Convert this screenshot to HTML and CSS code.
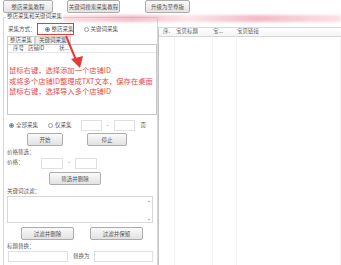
FILE: index.html
```html
<!DOCTYPE html>
<html lang="zh-CN">
<head>
    <meta charset="UTF-8">
    <title>淘宝采集</title>
    <link rel="stylesheet" href="styles.css">
</head>
<body>

    <!-- 顶部按钮 -->
    <div class="toolbar">
        <button class="btn btn-guide">整店采集教程</button>
        <button class="btn btn-search">关键词搜索采集教程</button>
        <button class="btn btn-upgrade">升级为至尊版</button>
    </div>
    <div class="banner"></div>

    <div class="main">
        <!-- 左侧设置 -->
        <fieldset class="group">
            <legend>整店采集和关键词采集</legend>

            <div class="row mode-row">
                <span>采集方式：</span>
                <label class="radio checked highlight"><i></i>整店采集</label>
                <label class="radio"><i></i>关键词采集</label>
            </div>

            <div class="tabs">
                <span class="tab active">整店采集</span>
                <span class="tab">关键词采集</span>
            </div>

            <div class="shop-list">
                <div class="list-head">
                    <span class="col-no">序号</span>
                    <span class="col-id">店铺ID</span>
                    <span>状...</span>
                </div>
                <div class="tips">
                    <p>鼠标右键，选择添加一个店铺ID</p>
                    <p>或将多个店铺ID整理成TXT文本，保存在桌面</p>
                    <p>鼠标右键，选择导入多个店铺ID</p>
                </div>
            </div>

            <div class="row page-row">
                <label class="radio checked"><i></i>全部采集</label>
                <label class="radio"><i></i>仅采集</label>
                <span class="box page-box"></span>
                <span class="dash">-</span>
                <span class="box page-box"></span>
                <span class="unit">页</span>
            </div>

            <div class="row btn-row">
                <button class="btn btn-start">开始</button>
                <button class="btn btn-stop">停止</button>
            </div>

            <div class="caption">价格筛选：</div>
            <div class="row price-row">
                <span class="price-label">价格：</span>
                <span class="box price-box"></span>
                <span class="dash">-</span>
                <span class="box price-box"></span>
            </div>
            <button class="btn btn-price">筛选并删除</button>

            <div class="caption">关键词过滤：</div>
            <div class="textarea">
                <div class="scroll"><span>▴</span><span>▾</span></div>
            </div>
            <div class="row filter-row">
                <button class="btn btn-filter">过滤并删除</button>
                <button class="btn btn-filter">过滤并保留</button>
            </div>

            <div class="caption">标题替换：</div>
            <div class="row replace-row">
                <span class="box replace-from"></span>
                <span class="replace-label">替换为</span>
                <span class="box replace-to"></span>
            </div>
        </fieldset>

        <!-- 右侧结果列表 -->
        <div class="result">
            <div class="result-head">
                <span class="c1">序.</span>
                <span class="c2">宝贝标题</span>
                <span class="c3">宝...</span>
                <span class="c4">宝贝链接</span>
            </div>
            <div class="result-body">
                <span class="c1"></span>
                <span class="c2"></span>
                <span class="c3"></span>
                <span class="c4"></span>
            </div>
        </div>
    </div>

    <!-- 标注 -->
    <div class="mark-box"></div>
    <svg class="mark-arrow" width="30" height="36" viewBox="0 0 30 36">
        <line x1="3" y1="2" x2="13" y2="26" stroke="#e53b35" stroke-width="2"/>
        <polygon points="8,25 20,22 17,34" fill="#e53b35"/>
    </svg>

</body>
</html>
```

FILE: styles.css
```css
* {
    box-sizing: border-box;
}

body {
    margin: 0;
    width: 341px;
    height: 265px;
    overflow: hidden;
    background: #fff;
    color: #555;
    font-family: "Noto Sans CJK SC", "Liberation Sans", sans-serif;
    font-size: 5.5px;
    line-height: 1;
    position: relative;
}

p {
    margin: 0;
}

/* 按钮 */
.btn {
    display: flex;
    align-items: center;
    justify-content: center;
    height: 13px;
    padding: 0;
    border: 1px solid #acacac;
    border-radius: 2px;
    background: linear-gradient(#fafafa, #e2e2e2);
    color: #555;
    font-family: inherit;
    font-size: 5.5px;
}

.toolbar {
    display: flex;
    height: 14px;
    padding-left: 3px;
}

.btn-guide {
    width: 50px;
}

.btn-search {
    width: 53px;
    margin-left: 14px;
}

.btn-upgrade {
    width: 45px;
    margin-left: 25px;
}

.banner {
    position: absolute;
    left: 63px;
    top: 15px;
    width: 278px;
    height: 7px;
    background: linear-gradient(90deg, rgba(240, 170, 185, 0.35), rgba(235, 140, 160, 0.55) 25%, rgba(245, 190, 200, 0.4) 45%, rgba(235, 130, 150, 0.55) 70%, rgba(245, 185, 195, 0.4));
    filter: blur(1px);
}

.main {
    display: flex;
    height: 251px;
}

/* 左侧分组 */
.group {
    width: 155px;
    margin: 0 0 0 3px;
    padding: 0 0 0 3px;
    border: 1px solid #d6d6d6;
    border-bottom: none;
    min-width: 0;
}

.group legend {
    padding: 0 1px;
    margin-left: -1px;
    height: 7px;
}

.row {
    display: flex;
    align-items: center;
}

.mode-row {
    height: 11px;
    margin-top: 3px;
    padding-left: 1px;
}

.radio {
    display: flex;
    align-items: center;
}

.radio i {
    width: 5px;
    height: 5px;
    margin-right: 2px;
    border: 1px solid #9a9a9a;
    border-radius: 50%;
    background: #fff;
}

.radio.checked i {
    border-color: #6a8ab0;
    background: radial-gradient(circle, #3b6fb5 45%, #fff 55%);
}

.mode-row .radio {
    margin-left: 9px;
}

.mode-row .radio + .radio {
    margin-left: 10px;
}

.tabs {
    display: flex;
    height: 8px;
    margin-top: 1px;
}

.tab {
    display: flex;
    align-items: center;
    padding: 0 2px;
    border: 1px solid #cfcfcf;
    border-bottom: none;
}

.tab.active {
    background: #fff;
}

.tab + .tab {
    background: #ececec;
    padding: 0 3px;
}

.shop-list {
    width: 150px;
    height: 71px;
    border: 1px solid #c8c8c8;
}

.list-head {
    display: flex;
    align-items: center;
    height: 8px;
    padding-left: 5px;
    border-bottom: 1px solid #e8e8e8;
}

.col-no {
    width: 15px;
}

.col-id {
    width: 31px;
}

.tips {
    margin-top: 12px;
    padding-left: 1px;
    color: #ea4a42;
    font-size: 7.3px;
    line-height: 10.5px;
    white-space: nowrap;
}

.page-row {
    height: 13px;
    margin-top: 4px;
    padding-left: 2px;
}

.page-row .radio + .radio {
    margin-left: 10px;
}

.box {
    height: 11px;
    border: 1px solid #e0e0e0;
    background: #fff;
}

.page-box {
    width: 21px;
}

.page-row .page-box:first-of-type {
    margin-left: 9px;
}

.dash {
    width: 12px;
    text-align: center;
}

.unit {
    margin-left: 6px;
}

.btn-row {
    margin-top: 1px;
}

.btn-start {
    width: 36px;
    margin-left: 20px;
}

.btn-stop {
    width: 40px;
    margin-left: 24px;
}

.caption {
    height: 8px;
    margin-top: 3px;
    display: flex;
    align-items: center;
}

.price-row {
    height: 12px;
}

.price-label {
    width: 34px;
}

.price-box {
    width: 22px;
}

.btn-price {
    width: 52px;
    margin: 3px 0 0 42px;
}

.textarea {
    display: flex;
    justify-content: flex-end;
    width: 146px;
    height: 27px;
    border: 1px solid #d8d8d8;
}

.scroll {
    display: flex;
    flex-direction: column;
    justify-content: space-between;
    width: 6px;
    padding: 1px 0;
    color: #aaa;
    font-size: 4px;
    text-align: center;
}

.filter-row {
    margin-top: 4px;
}

.btn-filter {
    width: 53px;
    margin-left: 14px;
}

.btn-filter + .btn-filter {
    margin-left: 16px;
}

.replace-row {
    margin-top: 0;
}

.replace-from {
    width: 60px;
    margin-left: 1px;
}

.replace-label {
    width: 26px;
    padding-left: 5px;
}

.replace-to {
    width: 59px;
}

/* 右侧列表 */
.result {
    flex: 1;
    display: flex;
    flex-direction: column;
    margin-top: 13px;
    border-left: 1px solid #c4c4c4;
    border-top: 1px solid #dcdcdc;
}

.result-head {
    display: flex;
    align-items: center;
    height: 9px;
    border-bottom: 1px solid #d8d8d8;
    background: linear-gradient(#fff, #f4f4f4);
}

.result-body {
    display: flex;
    flex: 1;
}

.c1 {
    width: 16px;
    padding-left: 4px;
}

.c2 {
    width: 38px;
    padding-left: 1px;
}

.c3 {
    width: 24px;
}

.c4 {
    flex: 1;
}

.result-body span {
    border-right: 1px solid #f3f3f3;
}

/* 红色标注 */
.mark-box {
    position: absolute;
    left: 37px;
    top: 23px;
    width: 37px;
    height: 12px;
    border: 1px solid #e53b35;
}

.mark-arrow {
    position: absolute;
    left: 63px;
    top: 34px;
}
```
